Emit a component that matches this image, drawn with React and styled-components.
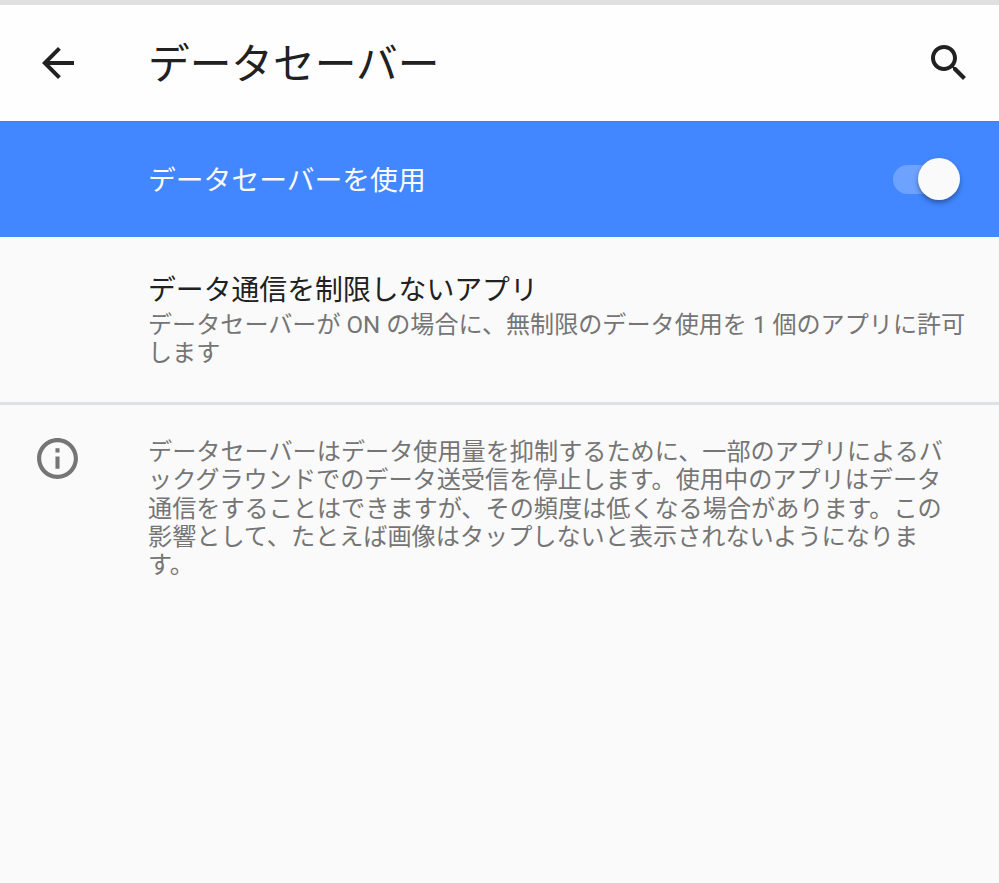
import React from 'react'
import styled, { createGlobalStyle } from 'styled-components'

const GlobalStyle = createGlobalStyle`
  html, body {
    margin: 0;
    padding: 0;
    background: #fafafa;
  }
  * {
    box-sizing: border-box;
  }
`

const Page = styled.div`
  width: 999px;
  height: 883px;
  overflow: hidden;
  background: #fafafa;
  font-family: "Roboto", "Noto Sans CJK JP", sans-serif;
`

const StatusEdge = styled.div`
  height: 5px;
  background: #e0e0e0;
`

const Header = styled.header`
  height: 116px;
  display: flex;
  align-items: center;
  background: #fefefe;
  padding: 0 26px 0 34px;
`

const HeaderIcon = styled.svg`
  display: block;
  flex: none;
`

const Title = styled.h1`
  flex: 1;
  margin: 4px 0 0 66px;
  font-size: 41.7px;
  line-height: 1.2;
  font-weight: 400;
  color: #212121;
`

const Banner = styled.div`
  height: 116px;
  display: flex;
  align-items: center;
  justify-content: space-between;
  padding: 0 39px 0 148px;
  background: #4287ff;
  box-shadow: inset 0 1px 0 #3f7fee;
`

const BannerLabel = styled.span`
  font-size: 27.8px;
  margin-bottom: 2px;
  color: #fafafa;
`

const Switch = styled.div`
  position: relative;
  width: 67px;
  height: 42px;
  display: flex;
  align-items: center;
`

const SwitchTrack = styled.div`
  width: 60px;
  height: 29px;
  border-radius: 15px;
  background: #6da2ff;
`

const SwitchThumb = styled.div`
  position: absolute;
  right: 0;
  top: 0;
  width: 42px;
  height: 42px;
  border-radius: 50%;
  background: #fafafa;
  box-shadow: 0 3px 5px rgba(0, 0, 0, 0.35);
`

const Row = styled.div`
  height: 168px;
  padding: 37px 30px 0 148px;
  border-bottom: 3px solid #dfe0e2;
`

const RowTitle = styled.div`
  font-size: 27.85px;
  line-height: 34px;
  color: #212121;
`

const RowSub = styled.div`
  font-size: 24.1px;
  line-height: 27.5px;
  margin-top: 4px;
  color: #757575;
`

const Info = styled.div`
  display: flex;
  padding: 29px 0 0 33px;
`

const InfoIcon = styled.svg`
  display: block;
  flex: none;
`

const InfoText = styled.p`
  width: 802px;
  margin: 4px 0 0 66px;
  font-size: 24.15px;
  line-height: 28.3px;
  color: #757575;
`

export default function App() {
  return (
    <Page>
      <GlobalStyle />
      <StatusEdge />
      <Header>
        <HeaderIcon width="48" height="48" viewBox="0 0 24 24" fill="#212121">
          <path d="M20 11H7.83l5.59-5.59L12 4l-8 8 8 8 1.41-1.41L7.83 13H20v-2z" />
        </HeaderIcon>
        <Title>データセーバー</Title>
        <HeaderIcon width="48" height="48" viewBox="0 0 24 24" fill="#212121">
          <path d="M15.5 14h-.79l-.28-.27C15.41 12.59 16 11.11 16 9.5 16 5.91 13.09 3 9.5 3S3 5.91 3 9.5 5.91 16 9.5 16c1.61 0 3.09-.59 4.23-1.57l.27.28v.79l5 4.99L20.49 19l-4.99-5zm-6 0C7.01 14 5 11.99 5 9.5S7.01 5 9.5 5 14 7.01 14 9.5 11.99 14 9.5 14z" />
        </HeaderIcon>
      </Header>
      <Banner>
        <BannerLabel>データセーバーを使用</BannerLabel>
        <Switch>
          <SwitchTrack />
          <SwitchThumb />
        </Switch>
      </Banner>
      <Row>
        <RowTitle>データ通信を制限しないアプリ</RowTitle>
        <RowSub>データセーバーが ON の場合に、無制限のデータ使用を 1 個のアプリに許可します</RowSub>
      </Row>
      <Info>
        <InfoIcon width="49" height="49" viewBox="0 0 24 24" fill="#757575">
          <path d="M11 7h2v2h-2zm0 4h2v6h-2zm1-9C6.48 2 2 6.48 2 12s4.48 10 10 10 10-4.48 10-10S17.52 2 12 2zm0 18c-4.41 0-8-3.59-8-8s3.59-8 8-8 8 3.59 8 8-3.59 8-8 8z" />
        </InfoIcon>
        <InfoText>データセーバーはデータ使用量を抑制するために、一部のアプリによるバックグラウンドでのデータ送受信を停止します。使用中のアプリはデータ通信をすることはできますが、その頻度は低くなる場合があります。この影響として、たとえば画像はタップしないと表示されないようになります。</InfoText>
      </Info>
    </Page>
  )
}
